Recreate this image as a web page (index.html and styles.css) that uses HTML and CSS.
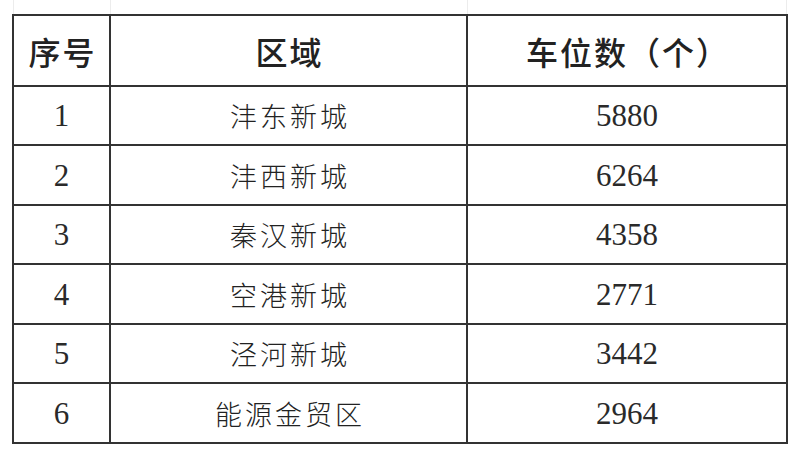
FILE: index.html
```html
<!DOCTYPE html>
<html lang="zh-CN">
<head>
<meta charset="utf-8">
<title>车位数</title>
<link rel="stylesheet" href="styles.css">
</head>
<body>
<div class="sheet">
  <div class="ghost">
    <span></span><span></span><span></span>
  </div>
  <table class="data">
    <colgroup>
      <col class="c1"><col class="c2"><col class="c3">
    </colgroup>
    <thead>
      <tr><th>序号</th><th>区域</th><th>车位数（个）</th></tr>
    </thead>
    <tbody>
      <tr><td><span class="num" lang="en">1</span></td><td class="zh">沣东新城</td><td><span class="num" lang="en">5880</span></td></tr>
      <tr class="alt"><td><span class="num" lang="en">2</span></td><td class="zh">沣西新城</td><td><span class="num" lang="en">6264</span></td></tr>
      <tr><td><span class="num" lang="en">3</span></td><td class="zh">秦汉新城</td><td><span class="num" lang="en">4358</span></td></tr>
      <tr class="alt"><td><span class="num" lang="en">4</span></td><td class="zh">空港新城</td><td><span class="num" lang="en">2771</span></td></tr>
      <tr><td><span class="num" lang="en">5</span></td><td class="zh">泾河新城</td><td><span class="num" lang="en">3442</span></td></tr>
      <tr class="alt"><td><span class="num" lang="en">6</span></td><td class="zh">能源金贸区</td><td><span class="num" lang="en">2964</span></td></tr>
    </tbody>
  </table>
</div>
</body>
</html>
```

FILE: styles.css
```css
html, body {
  margin: 0;
  padding: 0;
  background: #ffffff;
}

.sheet {
  padding-left: 12px;
  width: 776px;
}

.ghost {
  display: grid;
  grid-template-columns: 97px 357px 320px;
  height: 14px;
  padding-left: 1px;
}

.ghost span {
  border-left: 1px solid #ececec;
}

.ghost span:last-child {
  border-right: 1px solid #ececec;
}

.data {
  border-collapse: collapse;
  table-layout: fixed;
  width: 776px;
  color: #222222;
}

.c1 { width: 97px; }
.c2 { width: 357px; }
.c3 { width: 320px; }

.data th,
.data td {
  border: 2px solid #333333;
  text-align: center;
  vertical-align: middle;
  padding: 0;
}

.data thead tr {
  height: 71px;
}

.data th {
  font-family: "Noto Sans CJK SC", "Noto Sans", sans-serif;
  font-weight: 500;
  font-size: 32px;
  line-height: 1;
  letter-spacing: 2px;
  padding-left: 2px;
}

.data tbody tr {
  height: 59px;
}

.data tbody tr.alt {
  height: 60px;
}

.data td.zh {
  font-family: "Noto Sans CJK SC", sans-serif;
  font-weight: 300;
  font-size: 27px;
  line-height: 1;
  letter-spacing: 3px;
  padding-left: 3px;
}

.num {
  font-family: "Liberation Serif", "Times New Roman", Times, serif;
  font-weight: 400;
  font-size: 31px;
  line-height: 1;
  color: #2a2a2a;
}
```
